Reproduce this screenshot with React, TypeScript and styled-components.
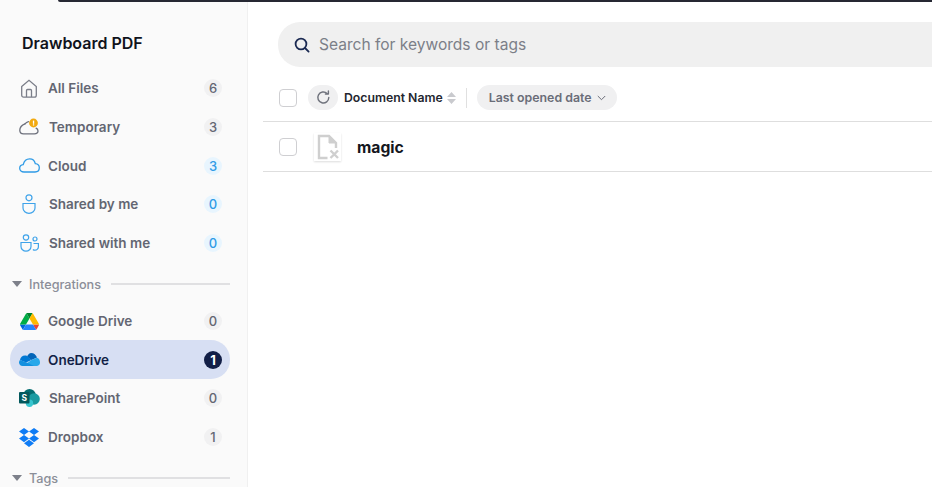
import React from 'react';
import styled, { createGlobalStyle } from 'styled-components';

const GlobalStyle = createGlobalStyle`
    html, body {
        margin: 0;
        padding: 0;
        height: 100%;
        overflow: hidden;
        background: #fff;
        font-family: "Inter", "Liberation Sans", sans-serif;
    }
`;

const Page = styled.div`
    display: flex;
    width: 932px;
    height: 487px;
    overflow: hidden;
    position: relative;
`;

const TopEdge = styled.div`
    position: absolute;
    top: 0;
    left: 58px;
    right: 0;
    height: 2px;
    background: #262833;
    border-bottom-left-radius: 3px;
`;

const Sidebar = styled.aside`
    width: 248px;
    flex-shrink: 0;
    background: #fafafa;
    border-right: 1px solid #f0f0f0;
    padding: 34px 18px 0 10px;
    box-sizing: border-box;
    height: 487px;
    overflow: hidden;
`;

const Brand = styled.div`
    font-size: 16px;
    line-height: 19px;
    font-weight: 600;
    color: #10131c;
    padding-left: 12px;
    margin-bottom: 15.8px;
`;

const NavRow = styled.div<{ $active?: boolean }>`
    display: flex;
    align-items: center;
    width: 220px;
    height: 38.7px;
    box-sizing: border-box;
    padding: 0 8px 0 9px;
    border-radius: 19px;
    background: ${p => (p.$active ? '#d7dff3' : 'transparent')};
`;

const NavIcon = styled.span`
    width: 20px;
    height: 20px;
    display: flex;
    align-items: center;
    justify-content: center;
    flex-shrink: 0;

    svg {
        flex-shrink: 0;
    }
`;

const NavLabel = styled.span<{ $active?: boolean; $inset?: number }>`
    flex: 1;
    margin-left: ${p => 9 + (p.$inset ?? 0)}px;
    font-size: 13.5px;
    line-height: 16px;
    font-weight: 600;
    color: ${p => (p.$active ? '#121f47' : '#636672')};
`;

const Count = styled.span<{ $tone: 'grey' | 'blue' | 'dark' }>`
    width: 18px;
    height: 18px;
    border-radius: 50%;
    display: flex;
    align-items: center;
    justify-content: center;
    font-size: 13px;
    font-weight: ${p => (p.$tone === 'dark' ? 700 : 500)};
    background: ${p => ({ grey: '#f1f1f2', blue: '#e8f5fe', dark: '#121f47' })[p.$tone]};
    color: ${p => ({ grey: '#636672', blue: '#2f9be6', dark: '#ffffff' })[p.$tone]};
`;

const SectionRow = styled.div<{ $top: number; $bottom: number }>`
    display: flex;
    align-items: center;
    width: 220px;
    height: 16px;
    margin-top: ${p => p.$top}px;
    margin-bottom: ${p => p.$bottom}px;
    padding-left: 2px;
    box-sizing: border-box;
`;

const Caret = styled.span`
    width: 0;
    height: 0;
    border-left: 5px solid transparent;
    border-right: 5px solid transparent;
    border-top: 6px solid #7d808a;
`;

const SectionLabel = styled.span`
    margin: 0 10px 0 7px;
    font-size: 12.65px;
    font-weight: 500;
    color: #8b8e98;
`;

const SectionLine = styled.span`
    flex: 1;
    height: 2px;
    background: #e0e0e2;
`;

const Main = styled.main`
    flex: 1;
    min-width: 0;
    padding: 22px 0 0 15px;
`;

const SearchBar = styled.div`
    display: flex;
    align-items: center;
    margin-left: 15px;
    height: 45px;
    border-radius: 22px 0 0 22px;
    background: #f0f0f0;
    padding-left: 16px;
`;

const SearchText = styled.span`
    margin-left: 9px;
    font-size: 15.55px;
    line-height: 18px;
    color: #7c7f88;
`;

const HeaderRow = styled.div`
    display: flex;
    align-items: center;
    height: 55px;
    box-sizing: border-box;
    padding: 7px 0 0 16px;
    border-bottom: 1px solid #dedede;
`;

const Check = styled.span`
    width: 16px;
    height: 16px;
    border: 1px solid #cfcfd2;
    border-radius: 4px;
    background: #fff;
    flex-shrink: 0;
`;

const RefreshButton = styled.span`
    width: 30px;
    height: 25px;
    margin-left: 11px;
    border-radius: 13px;
    background: #f0f0f1;
    display: flex;
    align-items: center;
    justify-content: center;
`;

const ColumnName = styled.span`
    margin-left: 6px;
    font-size: 12.25px;
    font-weight: 600;
    color: #24262f;
`;

const SortArrows = styled.svg`
    margin-left: 4px;
`;

const HeaderDivider = styled.span`
    width: 1px;
    height: 20px;
    margin: 0 10px 0 10px;
    background: #e0e0e0;
`;

const SortPill = styled.span`
    display: flex;
    align-items: center;
    height: 25px;
    padding: 0 11px 0 12px;
    border-radius: 13px;
    background: #f0f0f1;
    font-size: 12.35px;
    font-weight: 600;
    color: #6a6d78;
    gap: 5px;
`;

const FileRow = styled.div`
    display: flex;
    align-items: center;
    height: 50px;
    box-sizing: border-box;
    padding: 1px 0 0 16px;
    border-bottom: 1px solid #dedede;
`;

const FileThumb = styled.span`
    width: 27px;
    height: 28px;
    margin-left: 17px;
    background: #fff;
    box-shadow: 0 1px 2px rgba(0, 0, 0, 0.14);
    display: flex;
    align-items: center;
    justify-content: center;
`;

const FileName = styled.span`
    margin-left: 16px;
    font-size: 15.7px;
    font-weight: 700;
    color: #14161d;
`;

const HomeIcon = () => (
    <svg width="18" height="19" viewBox="0 0 18 19" fill="none" stroke="#7b7e89" strokeWidth="1.3">
        <path d="M1.700 7.600 9 1.300l7.300 6.300v8.600c0 1.100-.8 1.900-1.900 1.900H3.600c-1.100 0-1.900-.8-1.900-1.900z" />
        <path d="M6.500 18v-6.500c0-.6.4-1 1-1h3c.6 0 1 .4 1 1V18" />
    </svg>
);

const TemporaryIcon = () => (
    <svg width="20" height="18" viewBox="0 0 20 18" fill="none">
        <path d="M6 5.800C3 7 .8 9.500.8 12.200c0 2.200 1.700 3.600 3.700 3.600h10.800c2 0 3.700-1.100 3.700-2.800 0-1.300-.8-2.300-1.900-2.800" stroke="#6d707c" strokeWidth="1.3" strokeLinecap="round" />
        <path d="M6 5.800C7 4.600 8 4 9.500 3.600" stroke="#6d707c" strokeWidth="1.3" strokeLinecap="round" />
        <circle cx="14.500" cy="5" r="4.400" fill="#f2a90f" />
        <rect x="13.900" y="2.600" width="1.300" height="3.200" fill="#fff" />
        <rect x="13.900" y="6.300" width="1.300" height="1.200" fill="#fff" />
    </svg>
);

const CloudIcon = () => (
    <svg width="21" height="15" viewBox="0 0 21 15" fill="none" stroke="#2f9be6" strokeWidth="1.3">
        <path d="M5 14c-2.400 0-4.300-1.500-4.300-3.700 0-2 1.600-3.500 3.500-3.700C5 3.300 7.500.8 10.700.8c3 0 5 2 5.600 4.800 2.400.2 4 2 4 4.200 0 2.400-1.800 4.200-4.300 4.200z" />
    </svg>
);

const SharedByIcon = () => (
    <svg width="14" height="20" viewBox="0 0 14 20" fill="none" stroke="#3ea3ea" strokeWidth="1.2">
        <circle cx="7" cy="3.800" r="3" />
        <path d="M1 9.500h12v4.500a6 5.400 0 0 1-12 0z" />
    </svg>
);

const SharedWithIcon = () => (
    <svg width="19" height="18" viewBox="0 0 19 18" fill="none" stroke="#3ea3ea" strokeWidth="1.2">
        <circle cx="6" cy="3.500" r="2.700" />
        <circle cx="15" cy="5" r="2" />
        <path d="M1 8.500h10v4a5 4.600 0 0 1-10 0z" />
        <path d="M13.500 9.500h4.900v3.200a3.400 3.400 0 0 1-3.400 3.500c-.8 0-1.500-.2-2.100-.7" />
    </svg>
);

const GoogleDriveIcon = () => (
    <svg width="19" height="17" viewBox="0 0 87.300 78">
        <path d="m6.600 66.850 3.850 6.650c.8 1.400 1.950 2.500 3.300 3.300l13.750-23.800h-27.500c0 1.550.4 3.100 1.200 4.500z" fill="#0066da" />
        <path d="m43.650 25-13.750-23.800c-1.350.8-2.500 1.900-3.300 3.300l-25.400 44a9.060 9.060 0 0 0-1.200 4.500h27.500z" fill="#00ac47" />
        <path d="m73.550 76.800c1.350-.8 2.500-1.900 3.300-3.300l1.600-2.750 7.650-13.250c.8-1.400 1.200-2.950 1.200-4.500h-27.500l5.850 11.500z" fill="#ea4335" />
        <path d="m43.650 25 13.750-23.800c-1.350-.8-2.900-1.200-4.500-1.200h-18.500c-1.600 0-3.150.45-4.500 1.200z" fill="#00832d" />
        <path d="m59.800 53h-32.300l-13.750 23.800c1.350.8 2.900 1.200 4.500 1.200h50.800c1.600 0 3.150-.45 4.500-1.200z" fill="#2684fc" />
        <path d="m73.400 26.500-12.700-22c-.8-1.400-1.950-2.500-3.300-3.300l-13.750 23.800 16.150 28h27.450c0-1.550-.4-3.100-1.200-4.500z" fill="#ffba00" />
    </svg>
);

const OneDriveIcon = () => (
    <svg width="21" height="15" viewBox="0 0 21 14">
        <path d="M8 4.600 12.500 7.400 18 5.100C17 2.200 14.900.5 12.200.5 10.400.5 9 1.500 8 4.600z" fill="#0364b8" />
        <path d="M8.100 3.400C7.400 3.200 6.700 3.100 6 3.100 3.300 3.100 1.300 5 1 7.600L7 10l5.500-2.600z" fill="#0078d4" />
        <path d="M17.900 5.200 12.500 7.400 4 13.500h13.600c1.900 0 3.400-1.600 3.400-3.600 0-2.500-1.300-4.300-3.100-4.700z" fill="#28a8ea" />
        <path d="M1 7.400C.400 8 0 9.100 0 10.100c0 1.900 1.500 3.400 3.500 3.400H15L7 9.700z" fill="#1490df" />
    </svg>
);

const SharePointIcon = () => (
    <svg width="21" height="18" viewBox="0 0 21 18">
        <circle cx="10.500" cy="6.200" r="6.200" fill="#036c70" />
        <circle cx="15" cy="10" r="5.800" fill="#1a9ba1" />
        <circle cx="10.500" cy="14.300" r="3.700" fill="#37c6d0" />
        <rect x="0" y="3" width="10.500" height="11.500" rx="1" fill="#03585c" />
        <text x="5.200" y="12" fontSize="8.500" fontWeight="700" fill="#fff" textAnchor="middle" fontFamily="Inter, sans-serif">S</text>
    </svg>
);

const DropboxIcon = () => (
    <svg width="20" height="19" viewBox="0 0 20 17.200" preserveAspectRatio="none" fill="#0f7cf5">
        <path d="M5 0 0 3.200l5 3.200 5-3.200zM15 0l-5 3.200 5 3.200 5-3.200zM0 9.600l5 3.200 5-3.200-5-3.200zM15 6.400l-5 3.200 5 3.200 5-3.200zM5 13.900l5 3.300 5-3.300-5-3.200z" />
    </svg>
);

const SearchIcon = () => (
    <svg width="16" height="16" viewBox="0 0 16 16" fill="none" stroke="#1b2a52" strokeWidth="1.800" strokeLinecap="round">
        <circle cx="7" cy="7" r="5.400" />
        <path d="m11 11 3.600 3.600" />
    </svg>
);

const RefreshIcon = () => (
    <svg width="15" height="15" viewBox="0 0 15 15" fill="none" stroke="#6f727c" strokeWidth="1.400" strokeLinecap="round">
        <path d="M12.800 7.500a5.500 5.500 0 1 1-1.700-4" />
        <path d="M12.400 1v3h-3" strokeLinejoin="round" />
    </svg>
);

const ChevronIcon = () => (
    <svg width="9" height="6" viewBox="0 0 9 6" fill="none" stroke="#6a6d78" strokeWidth="1">
        <path d="m.8 1 3.700 3.700L8.200 1" />
    </svg>
);

const BrokenFileIcon = () => (
    <svg width="24" height="26" viewBox="0 0 24 26" fill="none" stroke="#cfcfcf" strokeWidth="2.400">
        <path d="M11.500 24H3V2h10l7 7v5" />
        <path d="M13 2v7h7" fill="#cfcfcf" strokeWidth="1" />
        <path d="m14.500 16.500 7.500 7.500M22 16.500 14.500 24" />
    </svg>
);

type Tone = 'grey' | 'blue' | 'dark';

interface NavEntry {
    label: string;
    count: number;
    tone: Tone;
    icon: React.ReactNode;
    inset?: number;
    active?: boolean;
}

const mainEntries: NavEntry[] = [
    { label: 'All Files', count: 6, tone: 'grey', icon: <HomeIcon /> },
    { label: 'Temporary', count: 3, tone: 'grey', icon: <TemporaryIcon />, inset: 1 },
    { label: 'Cloud', count: 3, tone: 'blue', icon: <CloudIcon /> },
    { label: 'Shared by me', count: 0, tone: 'blue', icon: <SharedByIcon />, inset: 1 },
    { label: 'Shared with me', count: 0, tone: 'blue', icon: <SharedWithIcon />, inset: 1 },
];

const integrationEntries: NavEntry[] = [
    { label: 'Google Drive', count: 0, tone: 'grey', icon: <GoogleDriveIcon /> },
    { label: 'OneDrive', count: 1, tone: 'dark', icon: <OneDriveIcon />, active: true },
    { label: 'SharePoint', count: 0, tone: 'grey', icon: <SharePointIcon />, inset: 1 },
    { label: 'Dropbox', count: 1, tone: 'grey', icon: <DropboxIcon /> },
];

const renderEntry = (entry: NavEntry) => (
    <NavRow key={entry.label} $active={entry.active}>
        <NavIcon>{entry.icon}</NavIcon>
        <NavLabel $active={entry.active} $inset={entry.inset}>{entry.label}</NavLabel>
        <Count $tone={entry.tone}>{entry.count}</Count>
    </NavRow>
);

export default function App() {
    return (
        <Page>
            <GlobalStyle />
            <Sidebar>
                <Brand>Drawboard PDF</Brand>
                {mainEntries.map(renderEntry)}
                <SectionRow $top={14.2} $bottom={9.3}>
                    <Caret />
                    <SectionLabel>Integrations</SectionLabel>
                    <SectionLine />
                </SectionRow>
                {integrationEntries.map(renderEntry)}
                <SectionRow $top={13.7} $bottom={0}>
                    <Caret />
                    <SectionLabel>Tags</SectionLabel>
                    <SectionLine />
                </SectionRow>
            </Sidebar>
            <Main>
                <SearchBar>
                    <SearchIcon />
                    <SearchText>Search for keywords or tags</SearchText>
                </SearchBar>
                <HeaderRow>
                    <Check />
                    <RefreshButton><RefreshIcon /></RefreshButton>
                    <ColumnName>Document Name</ColumnName>
                    <SortArrows width="9" height="14" viewBox="0 0 9 14" fill="#c9cace">
                        <path d="M4.500 1 9 6H0zM4.500 13 0 8h9z" />
                    </SortArrows>
                    <HeaderDivider />
                    <SortPill>
                        Last opened date
                        <ChevronIcon />
                    </SortPill>
                </HeaderRow>
                <FileRow>
                    <Check />
                    <FileThumb><BrokenFileIcon /></FileThumb>
                    <FileName>magic</FileName>
                </FileRow>
            </Main>
            <TopEdge />
        </Page>
    );
}
